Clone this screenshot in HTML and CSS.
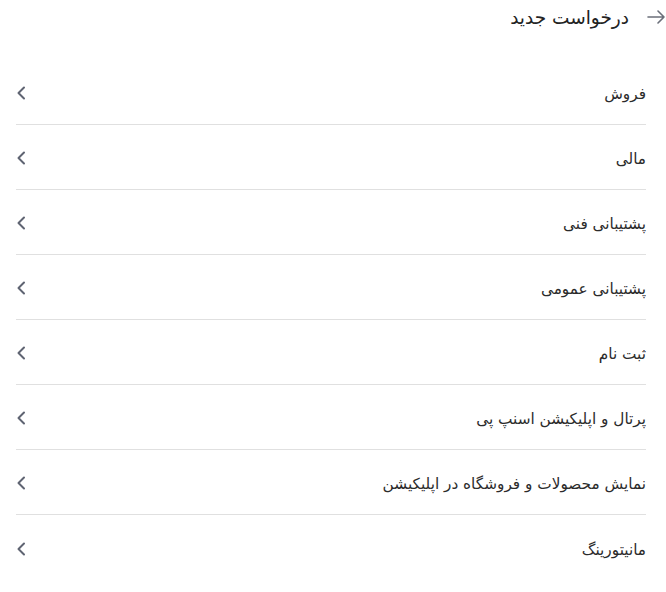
FILE: index.html
```html
<!DOCTYPE html>
<html lang="fa" dir="rtl">
<head>
<meta charset="utf-8">
<link rel="stylesheet" href="styles.css">
</head>
<body>
<div class="page">
  <header class="header">
    <svg class="back" width="18" height="14" viewBox="0 0 18 14" aria-hidden="true">
      <path d="M1 7 H17 M11 1 L17 7 L11 13" fill="none" stroke="#6b6f7a" stroke-width="1.6" stroke-linecap="round" stroke-linejoin="round"/>
    </svg>
    <h1 class="title">درخواست جدید</h1>
  </header>
  <ul class="list">
    <li class="item"><span class="label">فروش</span><svg class="chev" width="10" height="14" viewBox="0 0 10 14"><path d="M8 1.5 L2.5 7 L8 12.5" fill="none" stroke="#5f6472" stroke-width="2" stroke-linecap="round" stroke-linejoin="round"/></svg></li>
    <li class="item"><span class="label">مالی</span><svg class="chev" width="10" height="14" viewBox="0 0 10 14"><path d="M8 1.5 L2.5 7 L8 12.5" fill="none" stroke="#5f6472" stroke-width="2" stroke-linecap="round" stroke-linejoin="round"/></svg></li>
    <li class="item"><span class="label">پشتیبانی فنی</span><svg class="chev" width="10" height="14" viewBox="0 0 10 14"><path d="M8 1.5 L2.5 7 L8 12.5" fill="none" stroke="#5f6472" stroke-width="2" stroke-linecap="round" stroke-linejoin="round"/></svg></li>
    <li class="item"><span class="label">پشتیبانی عمومی</span><svg class="chev" width="10" height="14" viewBox="0 0 10 14"><path d="M8 1.5 L2.5 7 L8 12.5" fill="none" stroke="#5f6472" stroke-width="2" stroke-linecap="round" stroke-linejoin="round"/></svg></li>
    <li class="item"><span class="label">ثبت نام</span><svg class="chev" width="10" height="14" viewBox="0 0 10 14"><path d="M8 1.5 L2.5 7 L8 12.5" fill="none" stroke="#5f6472" stroke-width="2" stroke-linecap="round" stroke-linejoin="round"/></svg></li>
    <li class="item"><span class="label">پرتال و اپلیکیشن اسنپ پی</span><svg class="chev" width="10" height="14" viewBox="0 0 10 14"><path d="M8 1.5 L2.5 7 L8 12.5" fill="none" stroke="#5f6472" stroke-width="2" stroke-linecap="round" stroke-linejoin="round"/></svg></li>
    <li class="item"><span class="label">نمایش محصولات و فروشگاه در اپلیکیشن</span><svg class="chev" width="10" height="14" viewBox="0 0 10 14"><path d="M8 1.5 L2.5 7 L8 12.5" fill="none" stroke="#5f6472" stroke-width="2" stroke-linecap="round" stroke-linejoin="round"/></svg></li>
    <li class="item last"><span class="label">مانیتورینگ</span><svg class="chev" width="10" height="14" viewBox="0 0 10 14"><path d="M8 1.5 L2.5 7 L8 12.5" fill="none" stroke="#5f6472" stroke-width="2" stroke-linecap="round" stroke-linejoin="round"/></svg></li>
  </ul>
</div>
</body>
</html>
```
FILE: styles.css
```css
* { box-sizing: border-box; }
html, body { margin: 0; padding: 0; background: #ffffff; }
body {
  font-family: "DejaVu Sans", "Noto Sans", sans-serif;
  color: #2b2b2b;
}
.page { width: 666px; }
.header {
  height: 34px;
  display: flex;
  align-items: center;
  gap: 18px;
  padding-right: 1px;
}
.back { display: block; }
.title {
  margin: 0;
  font-size: 18.5px;
  font-weight: normal;
  color: #222222;
}
.list {
  list-style: none;
  margin: 26px 20px 0 16px;
  padding: 0;
}
.item {
  height: 65px;
  display: flex;
  align-items: center;
  justify-content: space-between;
  border-bottom: 1px solid #e0e0e0;
}
.item.last { border-bottom: none; }
.label {
  font-size: 15.3px;
  padding-top: 4px;
  color: #2b2b2b;
}
.chev { display: block; margin-left: 0; margin-top: 2px; }
```
